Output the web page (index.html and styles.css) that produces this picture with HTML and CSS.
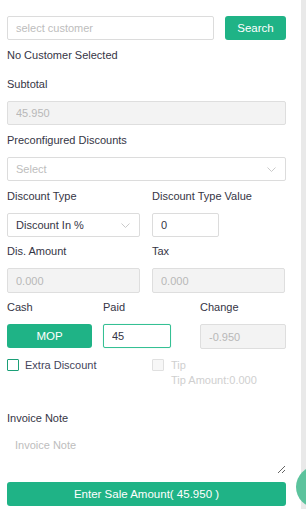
FILE: index.html
```html
<!DOCTYPE html>
<html>
<head>
<meta charset="utf-8">
<link rel="stylesheet" href="styles.css">
</head>
<body>
<div class="page">
  <main class="panel">
    <div class="search-row">
      <input class="field search-input" type="text" placeholder="select customer">
      <button class="btn btn-search">Search</button>
    </div>
    <div class="customer">No Customer Selected</div>

    <label class="label lbl-subtotal">Subtotal</label>
    <input class="field disabled" type="text" value="45.950" disabled>

    <label class="label">Preconfigured Discounts</label>
    <div class="field select placeholder">
      <span>Select</span>
      <svg class="chev" width="9" height="5" viewBox="0 0 9 5"><path d="M0.5 0.5 L4.5 4.5 L8.5 0.5" fill="none" stroke="#c4c4c4" stroke-width="0.9"/></svg>
    </div>

    <div class="two-col first">
      <div class="col">
        <label class="label">Discount Type</label>
        <div class="field select">
          <span>Discount In %</span>
          <svg class="chev" width="9" height="5" viewBox="0 0 9 5"><path d="M0.5 0.5 L4.5 4.5 L8.5 0.5" fill="none" stroke="#c4c4c4" stroke-width="0.9"/></svg>
        </div>
      </div>
      <div class="col">
        <label class="label">Discount Type Value</label>
        <input class="field value-input" type="text" value="0">
      </div>
    </div>

    <div class="two-col amounts">
      <div class="col">
        <label class="label">Dis. Amount</label>
        <input class="field disabled" type="text" value="0.000" disabled>
      </div>
      <div class="col">
        <label class="label">Tax</label>
        <input class="field disabled" type="text" value="0.000" disabled>
      </div>
    </div>

    <div class="pay-grid">
      <label class="label">Cash</label>
      <label class="label">Paid</label>
      <label class="label">Change</label>
      <button class="btn btn-mop">MOP</button>
      <input class="field paid-input" type="text" value="45">
      <input class="field disabled change-input" type="text" value="-0.950" disabled>
    </div>

    <div class="check-row">
      <div class="check">
        <span class="box box-green"></span>
        <span class="check-label">Extra Discount</span>
      </div>
      <div class="check tip">
        <span class="box box-off"></span>
        <div class="tip-text">
          <span class="check-label off">Tip</span>
          <span class="tip-amount">Tip Amount:0.000</span>
        </div>
      </div>
    </div>

    <label class="label lbl-note">Invoice Note</label>
    <textarea class="note" placeholder="Invoice Note"></textarea>

    <button class="btn btn-sale">Enter Sale Amount( 45.950 )</button>
  </main>
  <aside class="track"></aside>
</div>
<div class="fab"></div>
</body>
</html>
```

FILE: styles.css
```css
* { box-sizing: border-box; }
html, body { margin: 0; padding: 0; background: #fff; }
body {
  font-family: "Liberation Sans", Arial, sans-serif;
  font-size: 11px;
  color: #353545;
  overflow: hidden;
  height: 509px;
}
.page { display: flex; height: 509px; }
.panel {
  width: 279px;
  margin-left: 7px;
  padding-top: 16px;
  display: flex;
  flex-direction: column;
}
.track {
  width: 5px;
  margin-left: auto;
  background: #e9e9e9;
  height: 100%;
}
.search-row { display: flex; justify-content: space-between; height: 24px; }
.field {
  height: 24px;
  border: 1px solid #dcdcdc;
  border-radius: 2px;
  background: #fff;
  font-family: inherit;
  font-size: 11px;
  color: #353545;
  padding: 0 8px;
  outline: none;
  margin: 0;
  display: block;
  width: 100%;
  flex: none;
}
.field::placeholder { color: #bdbdbd; }
.search-input { width: 207px; }
.btn {
  border: none;
  background: #1fb386;
  color: #fff;
  font-family: inherit;
  font-size: 11px;
  border-radius: 3px;
  padding: 0;
  margin: 0;
  cursor: pointer;
  flex: none;
}
.btn-search { width: 61px; height: 24px; font-size: 11.5px; }
.customer { margin-top: 8px; line-height: 14px; }
.label { display: block; line-height: 14px; margin-bottom: 10px; flex: none; }
.lbl-subtotal { margin-top: 15px; }
.disabled {
  background: #f3f3f3;
  color: #b8b8b8;
  border-color: #dedede;
}
.panel > .field.disabled { margin-bottom: 8px; }
.select {
  display: flex;
  align-items: center;
  justify-content: space-between;
  padding-right: 9px;
}
.select.placeholder { color: #bdbdbd; margin-bottom: 8px; }
.chev { display: block; }
.two-col {
  display: grid;
  grid-template-columns: 133px 133px;
  column-gap: 12px;
  margin-bottom: 7px;
}
.value-input { width: 67px; }
.amounts { margin-bottom: 7px; }
.amounts .field { height: 25px; }
.pay-grid {
  display: grid;
  grid-template-columns: 96px 97px 86px;
}
.btn-mop { width: 85px; height: 24px; font-size: 11.5px; }
.paid-input {
  width: 68px;
  border-color: #35c094;
  box-shadow: 0 0 1px rgba(31,179,134,0.4);
}
.change-input { height: 25px; }
.check-row {
  display: grid;
  grid-template-columns: 145px 134px;
  margin-top: 10px;
}
.check { display: flex; align-items: flex-start; }
.box {
  width: 12px;
  height: 12px;
  border-radius: 1px;
  flex: none;
}
.box-green { border: 1.2px solid #1b9f77; }
.box-off { border: 1px solid #e0e0e0; background: #f7f7f7; }
.check-label { margin-left: 6px; line-height: 12px; color: #44445a; }
.check-label.off { color: #cfcfcf; margin-left: 0; }
.tip-text { display: flex; flex-direction: column; margin-left: 7px; }
.tip-amount { color: #cfcfcf; line-height: 14px; margin-top: 2px; }
.lbl-note { margin-top: 24px; margin-bottom: 7px; }
.note {
  border: none;
  resize: vertical;
  height: 42px;
  font-family: inherit;
  font-size: 11px;
  padding: 6px 8px;
  line-height: 14px;
  outline: none;
  width: 100%;
  margin: 0;
  display: block;
  flex: none;
}
.note::placeholder { color: #bdbdbd; }
.btn-sale { margin-top: 8px; height: 24px; width: 100%; font-size: 11.5px; }
.fab {
  position: fixed;
  left: 296px;
  top: 466px;
  width: 42px;
  height: 42px;
  border-radius: 50%;
  background: #5cc39d;
}
```
